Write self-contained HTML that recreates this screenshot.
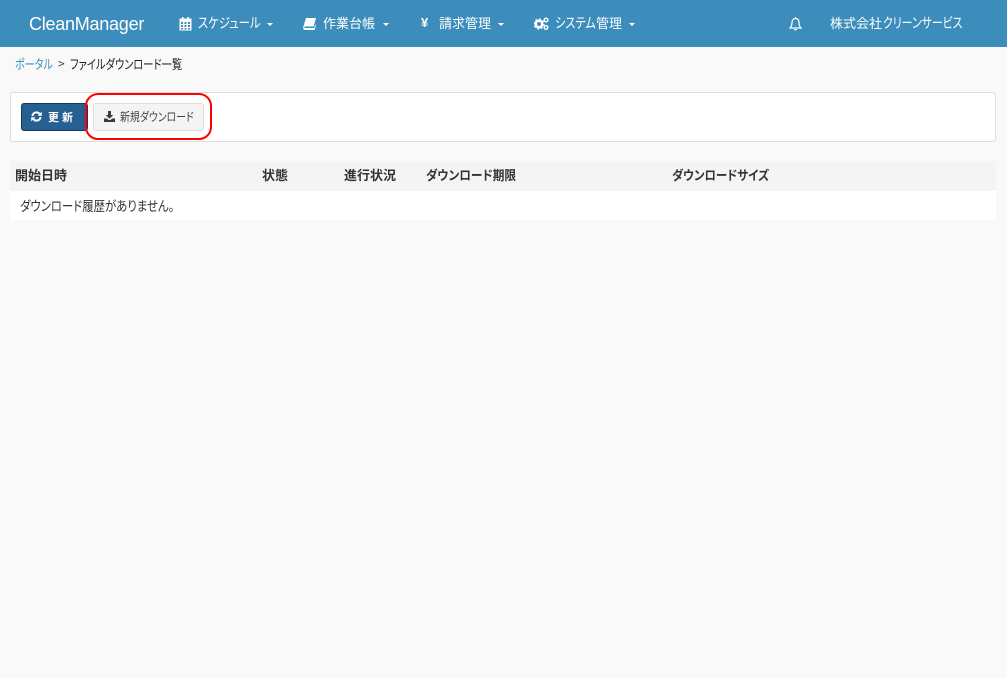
<!DOCTYPE html>
<html lang="ja"><head><meta charset="utf-8"><title>ファイルダウンロード一覧</title>
<style>
html,body{margin:0;padding:0;width:1007px;height:678px;overflow:hidden;background:#f9f9f9}
body{position:relative;font-family:"Liberation Sans","Noto Sans CJK JP",sans-serif;font-size:13px;color:#333;font-feature-settings:"palt"}
.a{position:absolute;white-space:nowrap;line-height:18px;transform-origin:0 50%}
svg{position:absolute;display:block}
.n{color:#fff;font-size:13px;font-family:"Noto Sans CJK JP",sans-serif}
.c{position:absolute;width:0;height:0;border-left:3px solid transparent;border-right:3px solid transparent;border-top:3px solid #fff;top:23px}
.h{font-weight:700;top:166px;color:#333;font-family:"Noto Sans CJK JP",sans-serif}
.j{font-family:"Noto Sans CJK JP",sans-serif}
</style></head><body>
<div style="position:absolute;left:0;top:0;width:1007px;height:47px;background:#3c8dbc"></div>
<div class="a" style="left:29px;top:14px;color:#fff;font-size:18px;line-height:20px;letter-spacing:-.25px">CleanManager</div>

<svg style="left:179px;top:17px" width="13" height="14" viewBox="0 0 13 14"><path d="M3 0h1.500v2H3zM8.500 0H10v2H8.500z" fill="#fff"/><rect x=".5" y="1.500" width="12" height="12" fill="#fff"/><path d="M2 5h2v2H2zM5.500 5h2v2h-2zM9 5h2v2H9zM2 8h2v2H2zM5.500 8h2v2h-2zM9 8h2v2H9zM2 11h2v1.500H2zM5.500 11h2v1.500h-2zM9 11h2v1.500H9z" fill="#3c8dbc"/></svg>
<div class="a n" style="left:198px;top:14px;font-size:14px;transform:scaleX(.81)">スケジュール</div><i class="c" style="left:267px"></i>

<svg style="left:303px;top:18px" width="13" height="12" viewBox="0 0 13 12"><path d="M3 0h10l-2.300 8.500H1.500C1 9.500 1.500 10 2.500 10h8.800l1-3.500.7.500-1.400 5H2C.5 12 0 10.500.3 9z" fill="#fff"/></svg>
<div class="a n" style="left:323px;top:14px">作業台帳</div><i class="c" style="left:383px"></i>

<div class="a" style="left:421px;top:14px;color:#fff;font-weight:700;font-size:13px">¥</div>
<div class="a n" style="left:439px;top:14px">請求管理</div><i class="c" style="left:498px"></i>

<svg style="left:534px;top:17px" width="15" height="13" viewBox="0 0 15 13"><circle cx="5" cy="7" r="3.300" fill="none" stroke="#fff" stroke-width="2.600"/><circle cx="5" cy="7" r="5" fill="none" stroke="#fff" stroke-width="1.200" stroke-dasharray="1.800 2.100"/><circle cx="12" cy="3" r="1.800" fill="none" stroke="#fff" stroke-width="1.400"/><circle cx="12" cy="10.500" r="1.800" fill="none" stroke="#fff" stroke-width="1.400"/></svg>
<div class="a n" style="left:555px;top:14px;font-size:14px;transform:scaleX(.8)">システム</div>
<div class="a n" style="left:596px;top:14px">管理</div><i class="c" style="left:629px"></i>

<svg style="left:789px;top:17px" width="13" height="14" viewBox="0 0 13 14"><path d="M6.500 1.500C4 1.500 3 3.500 3 5.500c0 3-1 4.500-2 5.500h11c-1-1-2-2.500-2-5.500 0-2-1-4-3.500-4z" fill="none" stroke="#fff" stroke-width="1.200"/><path d="M5 12h3c0 1-.7 1.600-1.500 1.600S5 13 5 12z" fill="#fff"/><rect x="6" y="0" width="1" height="2" fill="#fff"/></svg>
<div class="a n" style="left:830px;top:14px">株式会社</div>
<div class="a n" style="left:883px;top:14px;font-size:14px;transform:scaleX(.78)">クリーンサービス</div>

<div class="a j" style="left:15px;top:55px;font-size:13px;color:#3c8dbc;transform:scaleX(.775)">ポータル</div>
<div class="a j" style="left:58px;top:55px;font-size:12px;color:#333">&gt;</div>
<div class="a j" style="left:70px;top:55px;font-size:13px;color:#222;transform:scaleX(.79)">ファイルダウンロード一覧</div>

<div style="position:absolute;left:10px;top:92px;width:984px;height:48px;background:#fff;border:1px solid #ddd;border-radius:3px"></div>
<div style="position:absolute;left:21px;top:103px;width:65px;height:26px;background:#265f91;border:1px solid #163a5c;border-radius:3px"></div>
<svg style="left:31px;top:111px" width="11" height="11" viewBox="0 0 11 11"><path d="M1.500 5A4 4 0 0 1 8.500 2.800" fill="none" stroke="#fff" stroke-width="2"/><path d="M10.800 .6v4.200H6.600z" fill="#fff"/><path d="M9.500 6A4 4 0 0 1 2.500 8.200" fill="none" stroke="#fff" stroke-width="2"/><path d="M.2 10.400V6.200h4.200z" fill="#fff"/></svg>
<div class="a j" style="left:48px;top:108px;font-size:11px;color:#fff;font-weight:700;letter-spacing:3px">更新</div>

<div style="position:absolute;left:93px;top:103px;width:109px;height:26px;background:#f4f4f4;border:1px solid #ddd;border-radius:3px"></div>
<svg style="left:104px;top:111px" width="11" height="11" viewBox="0 0 11 11"><path d="M4 0h3v4h2.300L5.500 7.800 1.700 4H4zM0 7.500h3l1.500 1.500h2L8 7.500h3V11H0z" fill="#3a3a3a"/></svg>
<div class="a j" style="left:120px;top:108px;font-size:12px;color:#444;transform:scaleX(.825)">新規ダウンロード</div>

<div style="position:absolute;left:85px;top:93px;width:123px;height:43px;border:2px solid #f00;border-radius:13px"></div>

<div style="position:absolute;left:10px;top:161px;width:986px;height:30px;background:#f4f4f4"></div>
<div style="position:absolute;left:10px;top:191px;width:986px;height:29px;background:#fff"></div>
<div class="a h" style="left:15px">開始日時</div>
<div class="a h" style="left:262px">状態</div>
<div class="a h" style="left:344px">進行状況</div>
<div class="a h" style="left:426px;transform:scaleX(.9)">ダウンロード期限</div>
<div class="a h" style="left:672px;transform:scaleX(.88)">ダウンロードサイズ</div>
<div class="a j" style="left:20px;top:196px;font-size:13.500px;color:#333;transform:scaleX(.845)">ダウンロード履歴がありません。</div>
</body></html>
